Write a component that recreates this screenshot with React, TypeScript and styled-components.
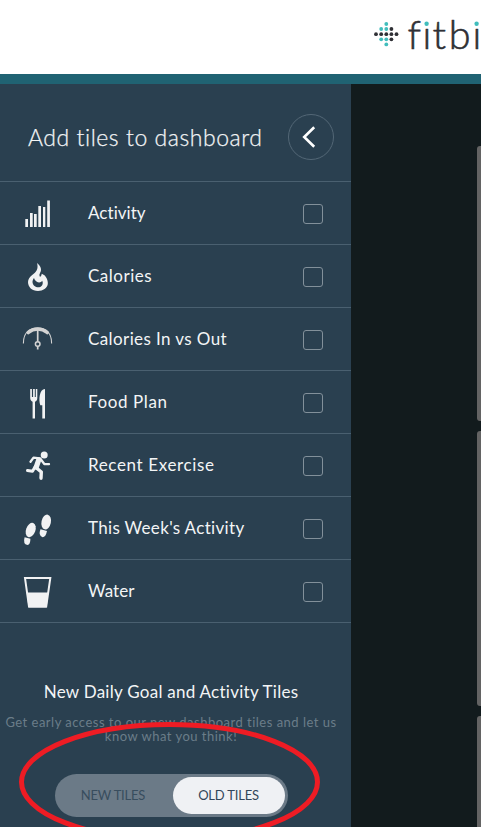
import React from "react";
import styled, { createGlobalStyle } from "styled-components";

const GlobalStyle = createGlobalStyle`
  * { box-sizing: border-box; }
  html, body { margin: 0; padding: 0; overflow: hidden; background: #121b1d; }
  body {
    font-family: Lato, "Liberation Sans", sans-serif;
    font-variant-ligatures: none;
  }
`;

const Page = styled.div`
  width: 481px;
  height: 827px;
  display: flex;
  flex-direction: column;
  overflow: hidden;
  background: #121b1d;
`;

const Header = styled.header`
  height: 84px;
  flex: none;
  display: flex;
  justify-content: flex-end;
  background: #fff;
  border-bottom: 10px solid #206373;
`;

const Body = styled.div`
  flex: 1;
  min-height: 0;
  display: flex;
  justify-content: space-between;
`;

const Sidebar = styled.aside`
  position: relative;
  width: 351px;
  height: 743px;
  background: #2a4050;
  color: #f3f5f6;
`;

const SidebarHead = styled.div`
  height: 98px;
  display: flex;
  align-items: center;
  justify-content: space-between;
  padding: 8px 17px 0 28px;
  border-bottom: 1px solid #4a6070;
`;

const Heading = styled.h1<{ $track: number }>`
  margin: 0;
  padding-top: 1px;
  font-size: 23px;
  font-weight: 300;
  line-height: 28px;
  white-space: nowrap;
  letter-spacing: ${(p) => p.$track}px;
  -webkit-text-stroke: 0.25px currentColor;
`;

const BackButton = styled.button`
  width: 46px;
  height: 46px;
  padding: 0 4px 0 0;
  border: 1px solid #536776;
  border-radius: 50%;
  background: transparent;
  display: flex;
  align-items: center;
  justify-content: center;
`;

const TileRow = styled.label`
  height: 63px;
  display: flex;
  align-items: center;
  padding: 0 28px 0 18px;
  border-bottom: 1px solid #4a6070;
`;

const TileIcon = styled.svg`
  width: 40px;
  height: 40px;
  flex: none;
  margin-top: -2px;
`;

const TileName = styled.span<{ $track: number }>`
  flex: 1;
  margin-left: 30px;
  font-size: 17px;
  line-height: 22px;
  white-space: nowrap;
  letter-spacing: ${(p) => p.$track}px;
`;

const Checkbox = styled.input`
  appearance: none;
  width: 20px;
  height: 20px;
  margin: 2px 0 0;
  border: 1px solid #82909a;
  border-radius: 3px;
`;

const Promo = styled.section`
  padding: 58px 9px 0 0;
  display: flex;
  flex-direction: column;
  align-items: center;
  text-align: center;
`;

const PromoTitle = styled.h2`
  margin: 0;
  font-size: 17px;
  font-weight: 400;
  line-height: 22px;
  letter-spacing: 0.26px;
  white-space: nowrap;
`;

const PromoText = styled.p`
  margin: 12px 0 0;
  font-size: 13px;
  line-height: 14px;
  color: #6b7d89;
  white-space: nowrap;
  letter-spacing: 0.49px;
`;

const Toggle = styled.div`
  width: 233px;
  height: 43px;
  margin: 31px 0 0 1px;
  padding: 3px;
  display: flex;
  border-radius: 22px;
  background: #6b7a87;
`;

const ToggleOption = styled.button<{ $active?: boolean }>`
  width: ${(p) => (p.$active ? 112 : 115)}px;
  height: 37px;
  padding: 0 ${(p) => (p.$active ? 1 : 5)}px 0 0;
  border: 0;
  border-radius: 19px;
  background: ${(p) => (p.$active ? "#eff1f4" : "transparent")};
  color: ${(p) => (p.$active ? "#32465a" : "#384d5e")};
  font: 400 13px/37px Lato, sans-serif;
  letter-spacing: -0.2px;
  white-space: nowrap;
`;

const Annotation = styled.svg`
  position: absolute;
  left: 0;
  top: 616px;
  width: 351px;
  height: 127px;
  pointer-events: none;
`;

const CardColumn = styled.div`
  width: 4px;
  padding-top: 62px;
  display: flex;
  flex-direction: column;
  gap: 10px;
  overflow: hidden;
`;

const Card = styled.div`
  width: 40px;
  height: 275px;
  flex: none;
  border-radius: 3px;
  background: #636363;
`;

const TEAL = "#41bdbc";
const INK = "#2f3035";

const dots: [number, number, boolean][] = [
  [25.3, 24, true],
  [20.2, 29, true], [25.3, 29, true], [30.4, 29, false],
  [15, 34.2, false], [20.2, 34.2, false], [25.3, 34.2, false], [30.4, 34.2, false], [35.5, 34.2, false],
  [20.2, 39.3, true], [25.3, 39.3, true], [30.4, 39.3, false],
  [25.3, 44.4, true],
];

const Logo = () => (
  <svg width="120" height="74" viewBox="0 0 120 74" aria-label="fitbi">
    {dots.map(([x, y, teal]) => (
      <circle key={`${x}-${y}`} cx={x} cy={y} r={1.9} fill={teal ? TEAL : INK} />
    ))}
    <text
      x="46.5 61.6 71.5 87.8 111.5"
      y="48.6"
      fontFamily="Lato, sans-serif"
      fontWeight="300"
      fontSize="39.5"
      fill={INK}
      stroke={INK}
      strokeWidth="0.6"
      strokeLinejoin="round"
    >
      fitbi
    </text>
    <rect x="62" y="17" width="7" height="10" fill="#fff" />
    <rect x="112" y="17" width="8" height="10" fill="#fff" />
    <circle cx="65.6" cy="23.8" r="2.2" fill={TEAL} />
    <circle cx="115.6" cy="23.8" r="2.2" fill={TEAL} />
  </svg>
);

const LIGHT = "#f1f2f3";

const ActivityIcon = () => (
  <g fill={LIGHT}>
    <rect x="7.3" y="27" width="2.7" height="8" />
    <rect x="12" y="21" width="2.7" height="14" />
    <rect x="16" y="22" width="2.7" height="13" />
    <rect x="20.3" y="14" width="2.7" height="21" />
    <rect x="25" y="15" width="2.3" height="20" />
    <rect x="29.2" y="8.5" width="2.7" height="26.5" />
  </g>
);

const CaloriesIcon = () => (
  <path
    fill={LIGHT}
    fillRule="evenodd"
    d="M19 8C23 11 24 15 22 18Q20.5 20.5 22 22Q23.5 21 23.8 18.8Q27.5 20 28.5 23C29.5 25 30 27 29.8 29C29.3 33 25 36 20 36C14 36 10 32 10 27C10 24 12 21.5 14.5 19.7C18 17.2 20.8 14 19 8ZM16 23C13.8 25.8 14.2 29 16.5 31C18.7 33 22.3 32.8 24 30.5C25 29 25 27.3 24.2 25.8C23 27.8 20.5 28 18.5 26.5Q16.5 25 16 23Z"
  />
);

const BalanceIcon = () => (
  <g fill="none" stroke="#d3d3d3">
    <path d="M5.4 25.5C5.4 11 16 10 19.7 10S33.6 11 33.6 25.5" strokeWidth="1.1" />
    <path d="M10.3 14.5Q14.3 11 19.7 11T29.2 14.5" strokeWidth="3.6" strokeLinecap="round" />
    <path d="M19.7 12V23.5M19.7 28V31.5" strokeWidth="1.7" />
    <circle cx="19.7" cy="26" r="2.3" strokeWidth="1.5" />
  </g>
);

const FoodIcon = () => (
  <g fill={LIGHT}>
    <path d="M12.2 8V17C12.2 19.3 13.5 20.4 14.6 20.8V37.5H17V20.8C18.3 20.3 19.3 19.2 19.3 17V8H17.8V16H16.8V8H15.1V16H13.9V8Z" />
    <path d="M27 8V37.5H24.3V24.2H22.3C20.5 19 21.3 8 27 8Z" />
  </g>
);

const RunnerIcon = () => (
  <g fill="none" stroke={LIGHT} strokeLinecap="round" strokeLinejoin="round">
    <circle cx="26.2" cy="11" r="3.5" fill={LIGHT} stroke="none" />
    <path d="M12.5 17.7L15.5 13.6L22 14.3L26.3 20L31 20.2" strokeWidth="2.3" />
    <path d="M20.7 16L18.3 23" strokeWidth="5.3" />
    <path d="M18.5 24L23.3 28L23 34.2" strokeWidth="3.4" />
    <path d="M17.3 22.5L14.5 27.3L9.5 26.4" strokeWidth="3" />
  </g>
);

const FootstepsIcon = () => (
  <g fill={LIGHT}>
    <ellipse cx="12.7" cy="23" rx="4.7" ry="7.4" transform="rotate(20 12.7 23)" />
    <path d="M6.6 30.2L12.4 31.7Q12.5 37.6 9.4 37.9Q4.7 37.4 6.6 30.2Z" />
    <ellipse cx="28.2" cy="15" rx="4.7" ry="7.5" transform="rotate(12 28.2 15)" />
    <path d="M22.5 22.3L29 24Q27.7 30.2 24.6 30.2Q19.9 28.7 22.5 22.3Z" />
  </g>
);

const WaterIcon = () => (
  <>
    <path d="M7 8.1H32.3L28.2 36.5H11Z" fill="none" stroke={LIGHT} strokeWidth="2" />
    <path d="M8.7 22.5H30.3L28.7 37.5H10.5Z" fill={LIGHT} />
  </>
);

const tiles = [
  { name: "Activity", track: 0.05, Icon: ActivityIcon },
  { name: "Calories", track: 0.5, Icon: CaloriesIcon },
  { name: "Calories In vs Out", track: 0.4, Icon: BalanceIcon },
  { name: "Food Plan", track: 0.6, Icon: FoodIcon },
  { name: "Recent Exercise", track: 0.63, Icon: RunnerIcon },
  { name: "This Week's Activity", track: 0.33, Icon: FootstepsIcon },
  { name: "Water", track: 0.05, Icon: WaterIcon },
];

export default function App() {
  return (
    <Page>
      <GlobalStyle />
      <Header>
        <Logo />
      </Header>
      <Body>
        <Sidebar>
          <SidebarHead>
            <Heading $track={0.55}>Add tiles to dashboard</Heading>
            <BackButton aria-label="Back">
              <svg width="14" height="22" viewBox="0 0 14 22">
                <path d="M12.2 1.2L2.2 11L12.2 20.8" fill="none" stroke="#fff" strokeWidth="2.6" />
              </svg>
            </BackButton>
          </SidebarHead>
          {tiles.map(({ name, track, Icon }) => (
            <TileRow key={name}>
              <TileIcon viewBox="0 0 40 40">
                <Icon />
              </TileIcon>
              <TileName $track={track}>{name}</TileName>
              <Checkbox type="checkbox" />
            </TileRow>
          ))}
          <Promo>
            <PromoTitle>New Daily Goal and Activity Tiles</PromoTitle>
            <PromoText>
              Get early access to our new dashboard tiles and let us
              <br />
              know what you think!
            </PromoText>
            <Toggle>
              <ToggleOption>NEW TILES</ToggleOption>
              <ToggleOption $active>OLD TILES</ToggleOption>
            </Toggle>
          </Promo>
          <Annotation viewBox="0 700 351 127">
            <ellipse cx="169.5" cy="782" rx="148" ry="57.5" fill="none" stroke="#ee1c24" strokeWidth="5" />
          </Annotation>
        </Sidebar>
        <CardColumn>
          <Card />
          <Card />
          <Card />
        </CardColumn>
      </Body>
    </Page>
  );
}
